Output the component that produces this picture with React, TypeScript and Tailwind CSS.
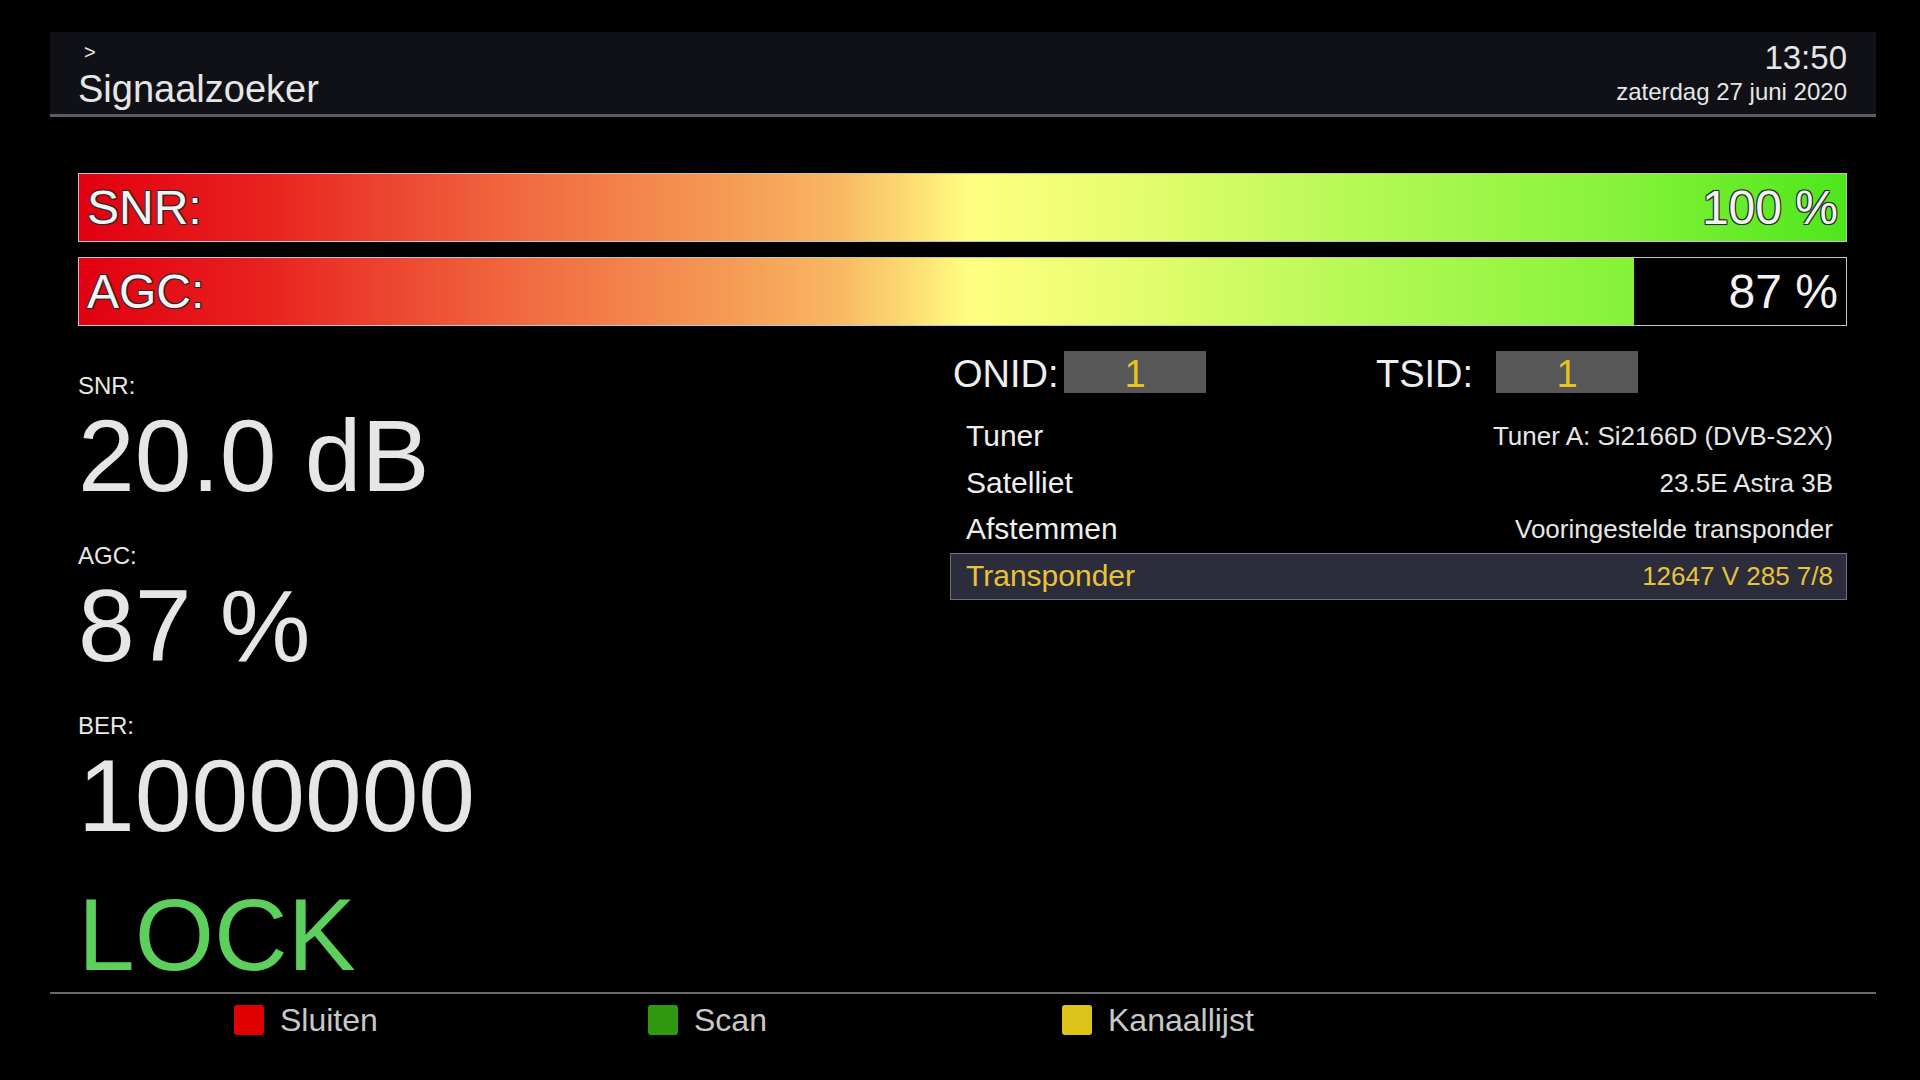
import React from "react"

const font = "font-['Liberation_Sans',Arial,sans-serif]"

const outline =
  "[text-shadow:-1px_-1px_0_#2a2a2a,1px_-1px_0_#2a2a2a,-1px_1px_0_#2a2a2a,1px_1px_0_#2a2a2a,0_0_2px_#2a2a2a]"

function LevelBar({ label, pct, fill }: { label: string; pct: number; fill: number }) {
  return (
    <div className="relative flex h-[69px] w-full border border-[#c4c4c4] bg-black">
      <div className="h-full overflow-hidden" style={{ width: `${fill}%` }}>
        <div
          className="h-full bg-[linear-gradient(90deg,#e10010_0%,#e8201e_10%,#f06a40_25%,#f59b56_37%,#f8b862_43%,#fcdc72_47%,#ffff82_50.5%,#e4fd6c_60%,#b6f955_72%,#86f33a_87%,#4ee61c_100%)]"
          style={{ width: `${10000 / fill}%` }}
        />
      </div>
      <span
        className={`absolute left-[8px] top-1/2 -translate-y-1/2 text-[48px] leading-none text-[#f2f2f2] ${outline}`}
      >
        {label}
      </span>
      <span
        className={`absolute right-[8px] top-1/2 -translate-y-1/2 text-[48px] leading-none text-[#f2f2f2] ${
          fill >= 100 ? outline : ""
        }`}
      >
        {pct} %
      </span>
    </div>
  )
}

function Reading({ label, value }: { label: string; value: string }) {
  return (
    <div className="flex flex-col">
      <span className="text-[24px] leading-none text-[#e8e8e8]">{label}</span>
      <span className="mt-[7px] text-[102px] leading-none text-[#e6e6e6]">{value}</span>
    </div>
  )
}

const rows = [
  { label: "Tuner", value: "Tuner A: Si2166D (DVB-S2X)" },
  { label: "Satelliet", value: "23.5E Astra 3B" },
  { label: "Afstemmen", value: "Vooringestelde transponder" },
]

const buttons = [
  { label: "Sluiten", color: "bg-[#e00000]" },
  { label: "Scan", color: "bg-[#2f9a10]" },
  { label: "Kanaallijst", color: "bg-[#dcc41a]" },
]

export default function App() {
  return (
    <div className={`flex h-[1080px] w-[1920px] flex-col overflow-hidden bg-black ${font}`}>
      {/* header */}
      <header className="ml-[50px] mr-[44px] mt-[32px] flex h-[85px] items-start justify-between border-b-[3px] border-[#5c5c62] bg-[#101116] pl-[28px] pr-[29px] text-[#e6e6e6]">
        <div className="flex flex-col">
          <span className="mt-[10px] pl-[6px] text-[20px] leading-none">&gt;</span>
          <span className="mt-[8px] text-[38px] leading-none">Signaalzoeker</span>
        </div>
        <div className="flex flex-col items-end">
          <span className="mt-[9px] text-[33px] leading-none">13:50</span>
          <span className="mt-[6px] text-[24px] leading-none">zaterdag 27 juni 2020</span>
        </div>
      </header>

      {/* level bars */}
      <section className="ml-[78px] mt-[56px] flex w-[1769px] flex-col gap-[15px]">
        <LevelBar label="SNR:" pct={100} fill={100} />
        <LevelBar label="AGC:" pct={87} fill={88} />
      </section>

      {/* details */}
      <main className="ml-[78px] flex flex-1">
        <div className="flex w-[872px] flex-col gap-[37px] pt-[48px]">
          <Reading label="SNR:" value="20.0 dB" />
          <Reading label="AGC:" value="87 %" />
          <Reading label="BER:" value="1000000" />
          <span className="text-[102px] leading-none text-[#5dcf5d]">LOCK</span>
        </div>

        <div className="flex w-[897px] flex-col pt-[25px]">
          <div className="flex h-[42px] items-center">
            <span className="w-[114px] pl-[3px] pt-[4px] text-[38px] leading-none text-[#eeeeee]">ONID:</span>
            <span className="flex h-[42px] w-[142px] items-center justify-center bg-[#575757] pt-[4px] text-[38px] leading-none text-[#e8c21e]">
              1
            </span>
            <span className="ml-[170px] w-[120px] pt-[4px] text-[38px] leading-none text-[#eeeeee]">TSID:</span>
            <span className="flex h-[42px] w-[142px] items-center justify-center bg-[#575757] pt-[4px] text-[38px] leading-none text-[#e8c21e]">
              1
            </span>
          </div>

          <div className="mt-[20px] flex flex-col">
            {rows.map((r) => (
              <div key={r.label} className="flex h-[46.5px] items-center justify-between pl-[16px] pr-[14px]">
                <span className="text-[30px] leading-none text-[#eeeeee]">{r.label}</span>
                <span className="text-[26px] leading-none text-[#e6e6e6]">{r.value}</span>
              </div>
            ))}
            <div className="flex h-[47px] items-center justify-between border border-[#707078] bg-[#2b2d3a] pl-[15px] pr-[13px]">
              <span className="text-[30px] leading-none text-[#e9c23a]">Transponder</span>
              <span className="text-[26px] leading-none text-[#e9c23a]">12647 V 285 7/8</span>
            </div>
          </div>
        </div>
      </main>

      {/* footer */}
      <footer className="ml-[50px] mr-[44px] flex h-[88px] border-t-2 border-[#6a6a6a] pl-[184px] pt-[11px]">
        {buttons.map((b) => (
          <div key={b.label} className="flex h-[30px] w-[414px] items-center gap-[16px]">
            <span className={`h-[30px] w-[30px] rounded-[3px] ${b.color}`} />
            <span className="text-[32px] leading-none text-[#c8c8c8]">{b.label}</span>
          </div>
        ))}
      </footer>
    </div>
  )
}
